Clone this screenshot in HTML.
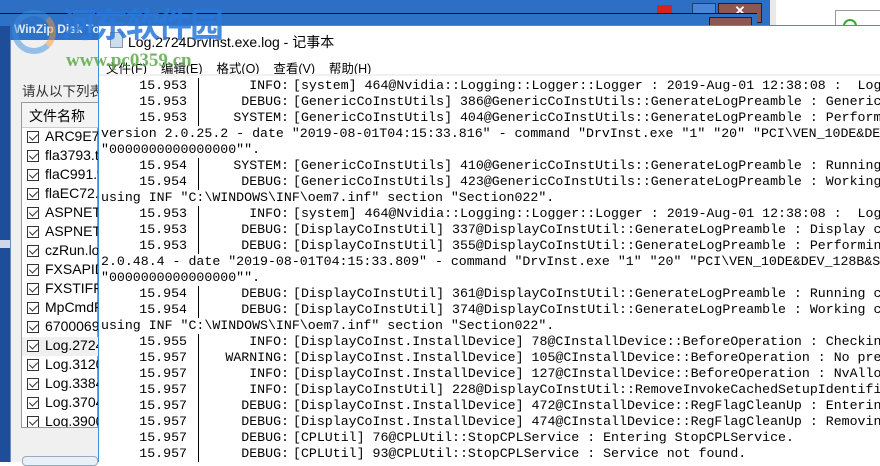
<!DOCTYPE html>
<html><head><meta charset="utf-8"><style>
*{margin:0;padding:0;box-sizing:border-box}
body{width:880px;height:462px;overflow:hidden;position:relative;background:#fff;font-family:"Liberation Sans","Noto Sans CJK SC",sans-serif}
.abs{position:absolute}
.mono{font-family:"Liberation Mono","Noto Sans CJK SC",monospace;font-size:13.25px;white-space:pre;color:#000;line-height:16px}
.li{position:absolute;left:0;height:16px;width:880px}
.ts{position:absolute;right:693px;top:0}
.bar{position:absolute;left:198px;top:0;width:1px;height:16px;background:#000}
.lv{position:absolute;right:591px;top:0}
.msg{position:absolute;left:293px;top:0}
.cont{position:absolute;left:101px;top:0}
.row{position:absolute;left:22px;width:76px;height:19px;font-size:14px;color:#000}
.cb{position:absolute;left:5px;top:3px;width:12px;height:12px;border:1px solid #333;background:#fff}
.cb:after{content:"";position:absolute;left:3px;top:0px;width:4px;height:7px;border:solid #333;border-width:0 1.5px 1.5px 0;transform:rotate(45deg)}
.rt{position:absolute;left:23px;top:0px;white-space:nowrap}
</style></head><body>
<div class="abs" style="left:0;top:0;width:770px;height:26px;background:#2c6fc4"></div>
<div class="abs" style="left:770px;top:0;width:6px;height:26px;background:#e8e8e8"></div>
<div class="abs" style="left:776px;top:0;width:104px;height:26px;background:#fff"></div>
<div class="abs" style="left:835px;top:10px;width:45px;height:16px;border:1px solid #999;border-right:none;background:#fff"></div>
<div class="abs" style="left:843px;top:19px;width:14px;height:10px;border-radius:7px 7px 0 0;border:2px solid #3a3;border-bottom:none"></div>
<div class="abs" style="left:657px;top:5px;width:15px;height:10px;background:#d92020"></div>
<div class="abs" style="left:692px;top:3px;width:24px;height:20px;background:#4a86d4;border:1px solid #1d3e70"></div>
<div class="abs" style="left:718px;top:3px;width:44px;height:20px;background:#8a5850;border:1px solid #3a1a10;color:#fff;text-align:center;font-size:13px;font-weight:bold;line-height:14px">✕</div>
<div class="abs" style="left:0;top:13px;width:757px;height:14px;background:#2e72c8;border-top:1px solid #111"></div>
<div class="abs" style="left:709px;top:17px;width:43px;height:10px;background:#8a5850;border:1px solid #3a1a10"></div>
<div class="abs" style="left:0;top:26px;width:98px;height:436px;background:#2e72c8"></div>
<div class="abs" style="left:0;top:26px;width:10px;height:436px;background:#1e4e9a"></div>
<div class="abs" style="left:10px;top:40px;width:88px;height:422px;background:#f0f0f0;border-left:1px solid #6a8ac0"></div>
<div class="abs" style="left:0;top:240px;width:10px;height:8px;background:#d0d8e8"></div>
<div class="abs" style="left:14px;top:22px;color:#fff;font-size:12px;font-weight:bold;white-space:nowrap;opacity:.85">WinZip Disk To</div>
<div class="abs" style="left:22px;top:80px;font-size:13.5px;color:#333;white-space:nowrap">请从以下列表</div>
<div class="abs" style="left:21px;top:102px;width:77px;height:326px;border:1px solid #999;background:#fff"></div>
<div class="abs" style="left:22px;top:103px;width:76px;height:25px;background:#f4f4f4;border-bottom:1px solid #ccc;font-size:14px;padding:3px 0 0 7px">文件名称</div>
<div class="abs" style="left:22px;top:337px;width:76px;height:19px;background:#f0f0f0"></div>
<div class="row" style="top:128px"><i class="cb"></i><span class="rt">ARC9E7D.</span></div>
<div class="row" style="top:147px"><i class="cb"></i><span class="rt">fla3793.tm</span></div>
<div class="row" style="top:166px"><i class="cb"></i><span class="rt">flaC991.tm</span></div>
<div class="row" style="top:185px"><i class="cb"></i><span class="rt">flaEC72.tm</span></div>
<div class="row" style="top:204px"><i class="cb"></i><span class="rt">ASPNETSe</span></div>
<div class="row" style="top:223px"><i class="cb"></i><span class="rt">ASPNETSe</span></div>
<div class="row" style="top:242px"><i class="cb"></i><span class="rt">czRun.log</span></div>
<div class="row" style="top:261px"><i class="cb"></i><span class="rt">FXSAPIDel</span></div>
<div class="row" style="top:280px"><i class="cb"></i><span class="rt">FXSTIFFDe</span></div>
<div class="row" style="top:299px"><i class="cb"></i><span class="rt">MpCmdRu</span></div>
<div class="row" style="top:318px"><i class="cb"></i><span class="rt">6700069d9</span></div>
<div class="row" style="top:337px"><i class="cb"></i><span class="rt">Log.2724D</span></div>
<div class="row" style="top:356px"><i class="cb"></i><span class="rt">Log.3120D</span></div>
<div class="row" style="top:375px"><i class="cb"></i><span class="rt">Log.3384S</span></div>
<div class="row" style="top:394px"><i class="cb"></i><span class="rt">Log.3704s</span></div>
<div class="row" style="top:413px;height:14px;overflow:hidden"><i class="cb"></i><span class="rt">Log.3900s</span></div>
<div class="abs" style="left:22px;top:456px;width:76px;height:10px;border:1px solid #9ab;border-radius:4px;background:#e8f0f8"></div>
<div class="abs" style="left:98px;top:25px;width:782px;height:437px;background:#fff;border-left:1px solid #3c8fe0;border-top:1px solid #3c8fe0"></div>
<div class="abs" style="left:110px;top:32px;width:13px;height:16px;background:#cde;border:1px solid #89a"></div>
<div class="abs" style="left:128px;top:32px;font-size:14px;color:#000;white-space:nowrap">Log.2724DrvInst.exe.log - 记事本</div>
<div class="abs" style="left:106px;top:58px;font-size:12.5px;color:#000;white-space:pre">文件(F)    编辑(E)    格式(O)    查看(V)    帮助(H)</div>
<div class="abs" style="left:99px;top:74px;width:781px;height:2px;background:#f0f0f0"></div>
<div class="abs" style="left:62px;top:8px;font-size:34px;font-weight:bold;color:rgba(40,120,220,.85);white-space:nowrap;letter-spacing:-2px;line-height:36px">河东软件园</div>
<div class="abs" style="left:66px;top:50px;font-size:19px;font-weight:bold;color:rgba(90,170,70,.85);white-space:nowrap;font-family:'Liberation Serif',serif">www.pc0359.cn</div>
<div class="abs" style="left:12px;top:10px;width:44px;height:44px;border-radius:50%;border:6px solid rgba(60,140,220,.5);border-right-color:rgba(240,150,60,.5)"></div>
<div class="mono abs" style="left:0;top:78px;width:880px;height:384px;overflow:hidden">
<div class="li" style="top:0"><span class="ts">15.953</span><i class="bar"></i><span class="lv">INFO:</span><span class="msg">[system] 464@Nvidia::Logging::Logger::Logger : 2019-Aug-01 12:38:08 :  Log</span></div>
<div class="li" style="top:16px"><span class="ts">15.953</span><i class="bar"></i><span class="lv">DEBUG:</span><span class="msg">[GenericCoInstUtils] 386@GenericCoInstUtils::GenerateLogPreamble : Generic</span></div>
<div class="li" style="top:32px"><span class="ts">15.953</span><i class="bar"></i><span class="lv">SYSTEM:</span><span class="msg">[GenericCoInstUtils] 404@GenericCoInstUtils::GenerateLogPreamble : Perform</span></div>
<div class="li" style="top:48px"><span class="cont">version 2.0.25.2 - date "2019-08-01T04:15:33.816" - command "DrvInst.exe "1" "20" "PCI\VEN_10DE&amp;DE</span></div>
<div class="li" style="top:64px"><span class="cont">"0000000000000000"".</span></div>
<div class="li" style="top:80px"><span class="ts">15.954</span><i class="bar"></i><span class="lv">SYSTEM:</span><span class="msg">[GenericCoInstUtils] 410@GenericCoInstUtils::GenerateLogPreamble : Running</span></div>
<div class="li" style="top:96px"><span class="ts">15.954</span><i class="bar"></i><span class="lv">DEBUG:</span><span class="msg">[GenericCoInstUtils] 423@GenericCoInstUtils::GenerateLogPreamble : Working</span></div>
<div class="li" style="top:112px"><span class="cont">using INF "C:\WINDOWS\INF\oem7.inf" section "Section022".</span></div>
<div class="li" style="top:128px"><span class="ts">15.953</span><i class="bar"></i><span class="lv">INFO:</span><span class="msg">[system] 464@Nvidia::Logging::Logger::Logger : 2019-Aug-01 12:38:08 :  Log</span></div>
<div class="li" style="top:144px"><span class="ts">15.953</span><i class="bar"></i><span class="lv">DEBUG:</span><span class="msg">[DisplayCoInstUtil] 337@DisplayCoInstUtil::GenerateLogPreamble : Display c</span></div>
<div class="li" style="top:160px"><span class="ts">15.953</span><i class="bar"></i><span class="lv">DEBUG:</span><span class="msg">[DisplayCoInstUtil] 355@DisplayCoInstUtil::GenerateLogPreamble : Performin</span></div>
<div class="li" style="top:176px"><span class="cont">2.0.48.4 - date "2019-08-01T04:15:33.809" - command "DrvInst.exe "1" "20" "PCI\VEN_10DE&amp;DEV_128B&amp;S</span></div>
<div class="li" style="top:192px"><span class="cont">"0000000000000000"".</span></div>
<div class="li" style="top:208px"><span class="ts">15.954</span><i class="bar"></i><span class="lv">DEBUG:</span><span class="msg">[DisplayCoInstUtil] 361@DisplayCoInstUtil::GenerateLogPreamble : Running c</span></div>
<div class="li" style="top:224px"><span class="ts">15.954</span><i class="bar"></i><span class="lv">DEBUG:</span><span class="msg">[DisplayCoInstUtil] 374@DisplayCoInstUtil::GenerateLogPreamble : Working c</span></div>
<div class="li" style="top:240px"><span class="cont">using INF "C:\WINDOWS\INF\oem7.inf" section "Section022".</span></div>
<div class="li" style="top:256px"><span class="ts">15.955</span><i class="bar"></i><span class="lv">INFO:</span><span class="msg">[DisplayCoInst.InstallDevice] 78@CInstallDevice::BeforeOperation : Checkin</span></div>
<div class="li" style="top:272px"><span class="ts">15.957</span><i class="bar"></i><span class="lv">WARNING:</span><span class="msg">[DisplayCoInst.InstallDevice] 105@CInstallDevice::BeforeOperation : No pre</span></div>
<div class="li" style="top:288px"><span class="ts">15.957</span><i class="bar"></i><span class="lv">INFO:</span><span class="msg">[DisplayCoInst.InstallDevice] 127@CInstallDevice::BeforeOperation : NvAlloc</span></div>
<div class="li" style="top:304px"><span class="ts">15.957</span><i class="bar"></i><span class="lv">INFO:</span><span class="msg">[DisplayCoInstUtil] 228@DisplayCoInstUtil::RemoveInvokeCachedSetupIdentifi</span></div>
<div class="li" style="top:320px"><span class="ts">15.957</span><i class="bar"></i><span class="lv">DEBUG:</span><span class="msg">[DisplayCoInst.InstallDevice] 472@CInstallDevice::RegFlagCleanUp : Enterin</span></div>
<div class="li" style="top:336px"><span class="ts">15.957</span><i class="bar"></i><span class="lv">DEBUG:</span><span class="msg">[DisplayCoInst.InstallDevice] 474@CInstallDevice::RegFlagCleanUp : Removin</span></div>
<div class="li" style="top:352px"><span class="ts">15.957</span><i class="bar"></i><span class="lv">DEBUG:</span><span class="msg">[CPLUtil] 76@CPLUtil::StopCPLService : Entering StopCPLService.</span></div>
<div class="li" style="top:368px"><span class="ts">15.957</span><i class="bar"></i><span class="lv">DEBUG:</span><span class="msg">[CPLUtil] 93@CPLUtil::StopCPLService : Service not found.</span></div>
</div>
</body></html>
